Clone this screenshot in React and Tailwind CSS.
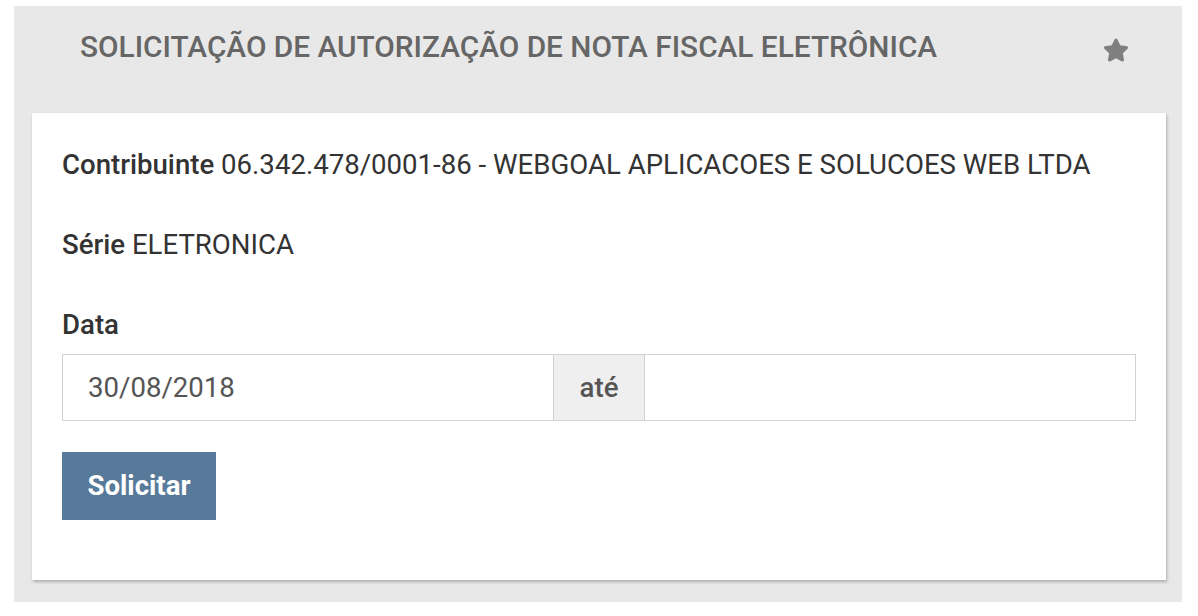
import React from "react";
import { FaStar } from "react-icons/fa";

export default function App() {
  return (
    <div className="w-[1198px] h-[616px] bg-white pt-[6px] pl-[14px]" style={{ fontFamily: "Roboto, 'Noto Sans', sans-serif" }}>
      <div className="w-[1168px] h-[596px] bg-[#e8e8e8] pl-[18px] pr-[16px] flex flex-col">
        <div className="h-[107px] flex items-start justify-between pl-[48px] pr-[37px] pt-[24px]">
          <h1 className="text-[29.8px] leading-[34px] font-medium text-[#666666] uppercase whitespace-nowrap">
            SOLICITAÇÃO DE AUTORIZAÇÃO DE NOTA FISCAL ELETRÔNICA
          </h1>
          <FaStar className="text-[#7f7f7f] w-[26px] h-[26px] mt-[7px]" />
        </div>
        <div className="bg-white h-[467px] shadow-[1px_2px_3px_rgba(0,0,0,0.25)] pt-[36px] px-[30px] text-[27.6px] text-[#333333]">
          <p className="leading-[32px] whitespace-nowrap">
            <span className="font-medium">Contribuinte</span> 06.342.478/0001-86 - WEBGOAL APLICACOES E SOLUCOES WEB LTDA
          </p>
          <p className="leading-[32px] mt-[48px]">
            <span className="font-medium">Série</span> ELETRONICA
          </p>
          <p className="leading-[32px] mt-[48px] font-medium">Data</p>
          <div className="mt-[13px] h-[67px] flex border border-[#d2d2d2]">
            <div className="w-[490px] flex items-center pl-[25px] text-[#555555]">30/08/2018</div>
            <div className="w-[92px] flex items-center justify-center bg-[#efefef] border-x border-[#d2d2d2] font-medium text-[#555555]">
              até
            </div>
            <div className="flex-1" />
          </div>
          <button className="mt-[31px] h-[68px] w-[154px] bg-[#587a9a] text-white font-bold text-[27.6px] flex items-center justify-center">
            Solicitar
          </button>
        </div>
      </div>
    </div>
  );
}
